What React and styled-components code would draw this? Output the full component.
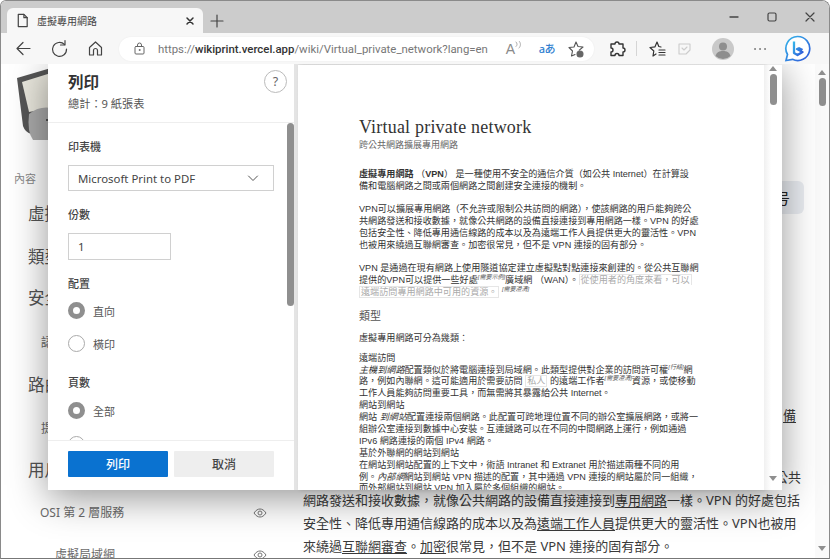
import React from 'react';
import styled, { createGlobalStyle } from 'styled-components';

const CJK = '"Noto Sans", "Noto Sans CJK TC", sans-serif';
const Global = createGlobalStyle`
  html, body { margin: 0; padding: 0; background: #fff; overflow: hidden; }
  body { font-family: ${CJK}; }
  * { box-sizing: border-box; }
  svg { flex: none; }
`;

const Win = styled.div`
  width: 830px; height: 559px; display: flex; flex-direction: column; overflow: hidden;
  background: #fff; border: 1px solid #8a8a8a; border-bottom-color: #777; border-top-right-radius: 8px; border-top-left-radius: 6px;
`;
const TabStrip = styled.div`
  height: 32px; flex: none; background: #cccccc; display: flex; align-items: flex-end; padding-left: 6px; position: relative;
`;
const Tab = styled.div`
  width: 196px; height: 25px; background: #f7f7f7; border-radius: 6px 6px 0 0; display: flex; align-items: center; padding: 0 8px 0 8px;
`;
const TabTitle = styled.span`
  flex: 1; margin-left: 7px; font-size: 10px; color: #444; white-space: nowrap;
`;
const NewTab = styled.div`
  width: 28px; height: 25px; display: flex; align-items: center; justify-content: center;
`;
const Caption = styled.div`
  margin-left: auto; height: 32px; align-self: flex-start; display: flex; align-items: center; padding-right: 12px; gap: 24px;
`;
const Toolbar = styled.div`
  height: 31px; flex: none; background: #f7f7f7; display: flex; align-items: center; padding-left: 12px; position: relative;
`;
const NavGroup = styled.div`
  display: flex; align-items: center; gap: 15px; width: 106px; flex: none;
`;
const Address = styled.div`
  width: 475px; flex: none; height: 24px; background: #fff; border-radius: 12px; display: flex; align-items: center; padding: 0 9px 0 14px; box-shadow: 0 0 2px rgba(0,0,0,.06);
`;
const Url = styled.div`
  margin-left: 12px; font-size: 11.4px; color: #777; white-space: nowrap; flex: 1; font-family: Roboto, sans-serif;
  b { font-weight: 500; color: #333; }
`;
const AddrIcons = styled.div`
  display: flex; align-items: center; gap: 12px; flex: none;
`;
const ReadAloud = styled.div`
  display: flex; align-items: flex-start; justify-content: flex-end; font-size: 14px; line-height: 16px; color: #8a8a8a; width: 20px; font-family: "Liberation Sans", sans-serif;
`;
const Translate = styled.div`
  font-size: 11px; line-height: 16px; font-weight: 500; color: #2f7fd1; width: 20px; text-align: right; white-space: nowrap; font-family: "Noto Sans", "Noto Sans CJK JP", sans-serif; letter-spacing: -.5px;
`;
const ToolIcons = styled.div`
  display: flex; align-items: center; margin-left: 13px; flex: none;
`;
const Slot = styled.div`
  width: ${p => p.$w}px; flex: none; display: flex; align-items: center; justify-content: center;
`;
const Sep = styled.div`
  width: 1px; height: 15px; background: #d5d5d5; margin: 0 10px; flex: none;
`;

const Content = styled.div`
  flex: 1; position: relative; display: flex; overflow: hidden; background: #fff;
`;
const Sidebar = styled.div`
  width: 290px; flex: none; padding: 4px 0 0 13px; color: #555;
`;
const BookWrap = styled.div`
  height: 102px; padding-left: 3px;
`;
const TocHead = styled.div`
  font-size: 11px; color: #888; height: 18px; line-height: 18px;
`;
const TocLarge = styled.div`
  font-size: 16.5px; color: #555; height: 24px; line-height: 24px; margin-left: 14px; margin-top: ${p => p.$mt}px; white-space: nowrap;
`;
const TocSmall = styled.div`
  font-size: 12px; color: #6b6b6b; height: 18px; line-height: 18px; display: flex; align-items: center; justify-content: space-between;
  margin-top: ${p => p.$mt}px; margin-left: ${p => p.$ml}px; width: ${p => 253 - p.$ml}px; white-space: nowrap;
`;
const Main = styled.div`
  flex: 1; padding: 117px 0 0 12px; position: relative; font-size: 13px; color: #3a3a3a; min-width: 0;
`;
const ChipRow = styled.div`
  display: flex; justify-content: flex-end; padding-right: 11px; height: 34px;
`;
const Chip = styled.div`
  width: 60px; height: 33px; background: #eaedf2; border-radius: 6px; font-size: 15px; color: #222; display: flex; align-items: center; justify-content: flex-end; padding-right: 14px;
`;
const BodyLine = styled.div`
  height: 23px; line-height: 23px; white-space: nowrap; margin-top: ${p => p.$mt || 0}px;
  padding-left: ${p => p.$pl || 0}px;
  u { text-underline-offset: 2px; }
`;
const PageScroll = styled.div`
  width: 14px; flex: none; display: flex; flex-direction: column; align-items: center; padding-top: 6px; position: relative; background: #fafafa;
`;
const Thumb = styled.div`
  width: 7px; height: ${p => p.$h}px; background: #8f8f8f; border-radius: 4px; margin-top: ${p => p.$mt}px;
`;
const Up = styled.div`
  width: 0; height: 0; border-left: 4px solid transparent; border-right: 4px solid transparent; border-bottom: 5px solid #8f8f8f;
`;
const Down = styled.div`
  width: 0; height: 0; border-left: 4px solid transparent; border-right: 4px solid transparent; border-top: 5px solid #8f8f8f;
  margin-top: ${p => p.$mt || 0}px;
`;

const Dialog = styled.div`
  position: absolute; left: 47px; top: -2px; width: 734px; height: 428px; background: #fff; display: flex;
  box-shadow: 0 8px 36px rgba(0,0,0,.42);
`;
const Panel = styled.div`
  width: 246px; flex: none; display: flex; flex-direction: column; background: #fff;
`;
const PanelHead = styled.div`
  height: 61px; flex: none; padding: 8px 7px 0 20px; border-bottom: 1px solid #eee; display: flex; justify-content: space-between;
`;
const PanelTitle = styled.div`
  font-size: 15.5px; font-weight: 700; color: #333; line-height: 24px;
`;
const PanelSub = styled.div`
  font-size: 11.2px; color: #555; line-height: 18px; margin-top: 1px;
`;
const Help = styled.div`
  width: 23px; height: 23px; border: 1px solid #bbb; border-radius: 50%; display: flex; align-items: center; justify-content: center; font-size: 12.5px; color: #666;
`;
const PanelBody = styled.div`
  flex: 1; display: flex; overflow: hidden; min-height: 0;
`;
const Form = styled.div`
  flex: 1; padding: 15px 0 0 20px; overflow: hidden;
`;
const Label = styled.div`
  font-size: 11px; font-weight: 500; color: #444; line-height: 18px; margin-top: ${p => p.$mt || 0}px;
`;
const Select = styled.div`
  width: 206px; height: 26px; border: 1px solid #d0d0d0; margin-top: 9px; display: flex; align-items: center; justify-content: space-between;
  padding: 0 14px 0 9px; font-size: 11.4px; color: #444;
`;
const Input = styled.div`
  width: 103px; height: 27px; border: 1px solid #d0d0d0; margin-top: 9px; padding-left: 9px; font-size: 11.4px; color: #444; display: flex; align-items: center;
`;
const RadioRow = styled.div`
  display: flex; align-items: center; gap: 8px; height: 17px; margin-top: ${p => p.$mt}px; font-size: 11px; color: #555;
`;
const Radio = styled.div`
  width: 17px; height: 17px; border-radius: 50%;
  border: ${p => (p.$on ? '5px solid #8f8f8f' : '1px solid #aaa')}; background: #fff; flex: none;
`;
const PanelScroll = styled.div`
  width: 7px; flex: none;
`;
const Footer = styled.div`
  height: 50px; flex: none; border-top: 1px solid #eee; display: flex; gap: 6px; padding: 10px 0 0 20px;
`;
const Button = styled.div`
  width: 100px; height: 26px; display: flex; align-items: center; justify-content: center; font-size: 12px; font-weight: 500; border-radius: 1px;
  background: ${p => (p.$primary ? '#0a72d0' : '#eeeeee')}; color: ${p => (p.$primary ? '#fff' : '#444')};
`;
const PreviewArea = styled.div`
  flex: 1; display: flex; background: linear-gradient(90deg, #e4e4e4, #ececec); padding: 3px 0 0 4px; min-width: 0;
`;
const Paper = styled.div`
  width: 466px; flex: none; background: #fff; padding: 51px 0 0 61px; overflow: hidden; color: #333; font-size: 9.1px; font-family: "Liberation Sans", "Noto Sans CJK TC", sans-serif;
  box-shadow: 2px 0 4px rgba(0,0,0,.15);
`;
const DocTitle = styled.div`
  font-family: "Liberation Serif", serif; font-size: 18px; line-height: 22px; color: #333; letter-spacing: .2px;
`;
const DocSub = styled.div`
  font-size: 9px; line-height: 12px; margin-top: 1px; color: #666;
`;
const Para = styled.div`
  margin-top: ${p => p.$mt}px;
`;
const L = styled.div`
  height: ${p => p.$h || 12.3}px; line-height: ${p => p.$h || 12.3}px; white-space: nowrap;
  sup { font-size: 6px; font-style: italic; line-height: 0; color: #555; }
`;
const H2 = styled.div`
  font-size: 11px; line-height: 14px; margin-top: 10px; color: #555;
`;
const Hint = styled.span`
  color: #aaa; border: 1px solid #e6e6e6; border-bottom: ${p => (p.$open ? 'none' : '1px solid #e6e6e6')}; padding: 0 1px;
`;
const PreviewScroll = styled.div`
  flex: 1; display: flex; flex-direction: column; align-items: center; padding-top: 1px; background: linear-gradient(90deg, #f0f0f0, #fff 40%);
`;

const S = { fill: 'none', stroke: '#444', strokeWidth: 1.3, strokeLinecap: 'round', strokeLinejoin: 'round' };
const Ic = ({ s = 16, v = 16, c, children }) => (
  <svg width={s} height={s} viewBox={`0 0 ${v} ${v}`} {...S} {...c}>{children}</svg>
);
const Eye = () => (
  <svg width="14" height="10" viewBox="0 0 14 10" fill="none" stroke="#777" strokeWidth="1">
    <path d="M1 5c2-3 4-4 6-4s4 1 6 4c-2 3-4 4-6 4S3 8 1 5z" /><circle cx="7" cy="5" r="2" />
  </svg>
);
const Book = () => (
  <svg width="40" height="72" viewBox="0 0 40 72">
    <path d="M0 10 L34 0 V45 L14 66 Q8 64 6 58z" fill="#555" />
    <path d="M5 14 L34 5 V40 L12 44z" fill="#e9e7dd" />
    <path d="M12 46 Q22 38 34 40 V72 H16 Q10 64 12 46z" fill="#aaa" />
    <circle cx="30" cy="52" r="1" fill="#333" />
  </svg>
);

export default function App() {
  return (
    <Win>
      <Global />
      <TabStrip>
        <Tab>
          <Ic s={15}><path d="M3.500 1.500h6l3.500 3.500v9.500h-9.500z" /><path d="M9.500 1.500V5H13" /></Ic>
          <TabTitle>虛擬專用網路</TabTitle>
          <Ic s={10} v={10} c={{ strokeWidth: 1.5, stroke: '#333' }}><path d="M2 2l6 6M8 2l-6 6" /></Ic>
        </Tab>
        <NewTab>
          <Ic s={14} v={14} c={{ strokeWidth: 1.2 }}><path d="M7 1v12M1 7h12" /></Ic>
        </NewTab>
        <Caption>
          <Ic s={14} v={14} c={{ strokeWidth: 1.3 }}><path d="M3 7h8" /></Ic>
          <Ic s={14} v={14} c={{ strokeWidth: 1.2 }}><rect x="3" y="3" width="8" height="8" rx="1.5" /></Ic>
          <Ic s={14} v={14} c={{ strokeWidth: 1.2 }}><path d="M3 3l8 8M11 3l-8 8" /></Ic>
        </Caption>
      </TabStrip>
      <Toolbar>
        <NavGroup>
          <Ic s={21} v={21} c={{ strokeWidth: 1.2 }}><path d="M17 10.500H4M10 4.500l-6 6 6 6" /></Ic>
          <Ic s={21} v={21} c={{ strokeWidth: 1.2 }}><path d="M15.500 6.500A7 7 0 1 0 17.500 11" /><path d="M16 2.500v4.500h-4.500" /></Ic>
          <Slot $w={21}><Ic s={17} v={17} c={{ strokeWidth: 1.2 }}><path d="M2.500 7.500L8.500 2l6 5.500V15h-4v-4.500a2 2 0 0 0-4 0V15h-4z" /></Ic></Slot>
        </NavGroup>
        <Address>
          <Ic s={13} v={13} c={{ strokeWidth: 1, stroke: '#666' }}><rect x="2" y="4.500" width="9" height="7.500" rx="1" /><path d="M4.500 4.500V3a2 2 0 0 1 4 0v1.500" /><circle cx="6.500" cy="8" r=".5" /></Ic>
          <Url>https://<b>wikiprint.vercel.app</b>/wiki/Virtual_private_network?lang=en</Url>
          <AddrIcons>
            <ReadAloud>A<Ic s={8} v={8} c={{ strokeWidth: .8, stroke: '#999' }}><path d="M1 1c1.500 1.500 1.500 3 0 4.500M4 0c2 2 2 5 0 7" /></Ic></ReadAloud>
            <Translate>aあ</Translate>
            <Ic s={18} v={18} c={{ strokeWidth: 1.1, stroke: '#555' }}><path d="M9 2l2 4.500 5 .5-3.700 3.200M8 14.500L4.500 16l1-5L2 7.500l5-.5L9 2" /><circle cx="13" cy="14" r="3" fill="#666" stroke="#666" /></Ic>
          </AddrIcons>
        </Address>
        <ToolIcons>
          <Slot $w={19}><Ic s={18} v={18} c={{ strokeWidth: 1.4, stroke: '#333' }}><path d="M7 4a2 2 0 0 1 4 0h4v4a2 2 0 0 1 0 4v3.500H11a2 2 0 0 0-4 0H3V12a2 2 0 0 0 0-4V4z" /></Ic></Slot>
          <Sep />
          <Slot $w={19}><Ic s={18} v={18} c={{ strokeWidth: 1.2, stroke: '#333' }}><path d="M9 2l1.800 4.500L13 7M8 14l-3 2 .8-5L2 7.500l5-.7L9 2M11 10h6M11 12.500h6M11 15h6" /></Ic></Slot>
          <Slot $w={36}><Ic s={17} v={17} c={{ strokeWidth: 1.1, stroke: '#ccc' }}><path d="M3 4h11v6l-4 4H3z" /><path d="M6 8l2 2 3-3" /></Ic></Slot>
          <Slot $w={42}>
            <svg width="22" height="22" viewBox="0 0 22 22"><circle cx="11" cy="11" r="11" fill="#c9c9c9" /><circle cx="11" cy="8.500" r="4" fill="#8e8e8e" /><path d="M3.500 18c1-4 4-5 7.500-5s6.500 1 7.500 5a11 11 0 0 1-15 0z" fill="#8e8e8e" /></svg>
          </Slot>
          <Slot $w={32}><Ic s={16} c={{ strokeWidth: 1.6, stroke: '#333' }}><path d="M3 8h.1M8 8h.1M13 8h.1" /></Ic></Slot>
          <Slot $w={42}>
            <svg width="27" height="27" viewBox="0 0 27 27">
              <defs><linearGradient id="bg" x1="0" y1="0" x2="1" y2="1"><stop offset="0" stopColor="#36b6ea" /><stop offset="1" stopColor="#2f57d8" /></linearGradient></defs>
              <path d="M13.500 1.500a12 12 0 1 1-5 22.800L2 25.500l1.500-6A12 12 0 0 1 13.500 1.500z" fill="#fff" stroke="url(#bg)" strokeWidth="1.700" />
              <path d="M10 6.500V18l3.500 2 5-3-5.500-3 2-.8 3.500 1.800" fill="none" stroke="url(#bg)" strokeWidth="2.300" strokeLinejoin="round" />
            </svg>
          </Slot>
        </ToolIcons>
      </Toolbar>
      <Content>
        <Sidebar>
          <BookWrap><Book /></BookWrap>
          <TocHead>內容</TocHead>
          <TocLarge $mt={14}>虛擬</TocLarge>
          <TocLarge $mt={19}>類型</TocLarge>
          <TocLarge $mt={17}>安全</TocLarge>
          <TocSmall $ml={27} $mt={24}>認</TocSmall>
          <TocLarge $mt={21}>路由</TocLarge>
          <TocSmall $ml={27} $mt={23}>提</TocSmall>
          <TocLarge $mt={20}>用戶</TocLarge>
          <TocSmall $ml={26} $mt={22}>OSI 第 2 層服務<Eye /></TocSmall>
          <TocSmall $ml={41} $mt={24}>虛擬局域網<Eye /></TocSmall>
        </Sidebar>
        <Main>
          <ChipRow><Chip>号</Chip></ChipRow>
          <BodyLine $mt={189} $pl={480}><u>備</u></BodyLine>
          <BodyLine $mt={39} $pl={472}>公共</BodyLine>
          <BodyLine>網路發送和接收數據，就像公共網路的設備直接連接到<u>專用網路</u>一樣。VPN 的好處包括</BodyLine>
          <BodyLine>安全性、降低專用通信線路的成本以及為<u>遠端工作人員</u>提供更大的靈活性。VPN也被用</BodyLine>
          <BodyLine>來繞過<u>互聯網審查</u>。<u>加密</u>很常見，但不是 VPN 連接的固有部分。</BodyLine>
        </Main>
        <PageScroll>
          <Up />
          <Thumb $h={28} $mt={3} />
          <Down $mt={440} />
        </PageScroll>
        <Dialog>
          <Panel>
            <PanelHead>
              <div>
                <PanelTitle>列印</PanelTitle>
                <PanelSub>總計：9 紙張表</PanelSub>
              </div>
              <Help>?</Help>
            </PanelHead>
            <PanelBody>
              <Form>
                <Label>印表機</Label>
                <Select>Microsoft Print to PDF
                  <Ic s={12} v={12} c={{ strokeWidth: 1, stroke: '#555' }}><path d="M1.500 4l4.500 4.500L10.500 4" /></Ic>
                </Select>
                <Label $mt={15}>份數</Label>
                <Input>1</Input>
                <Label $mt={15}>配置</Label>
                <RadioRow $mt={9}><Radio $on />直向</RadioRow>
                <RadioRow $mt={16}><Radio />橫印</RadioRow>
                <Label $mt={22}>頁數</Label>
                <RadioRow $mt={10}><Radio $on />全部</RadioRow>
                <RadioRow $mt={17}><Radio />備案範圍</RadioRow>
              </Form>
              <PanelScroll><Thumb $h={183} $mt={0} /></PanelScroll>
            </PanelBody>
            <Footer>
              <Button $primary>列印</Button>
              <Button>取消</Button>
            </Footer>
          </Panel>
          <PreviewArea>
            <Paper>
              <DocTitle>Virtual private network</DocTitle>
              <DocSub>跨公共網路擴展專用網路</DocSub>
              <Para $mt={17}>
                <L><b>虛擬專用網路</b> （<b>VPN</b>） 是一種使用不安全的通信介質（如公共 Internet）在計算設</L>
                <L>備和電腦網路之間或兩個網路之間創建安全連接的機制。</L>
              </Para>
              <Para $mt={10}>
                <L>VPN可以擴展專用網路（不允許或限制公共訪問的網路），使該網路的用戶能夠跨公</L>
                <L>共網路發送和接收數據，就像公共網路的設備直接連接到專用網路一樣。VPN 的好處</L>
                <L>包括安全性、降低專用通信線路的成本以及為遠端工作人員提供更大的靈活性。VPN</L>
                <L>也被用來繞過互聯網審查。加密很常見，但不是 VPN 連接的固有部分。</L>
              </Para>
              <Para $mt={10}>
                <L>VPN 是通過在現有網路上使用隧道協定建立虛擬點對點連接來創建的。從公共互聯網</L>
                <L>提供的VPN可以提供一些好處<sup>[需要示例]</sup>廣域網 （WAN）。<Hint $open>從使用者的角度來看，可以</Hint></L>
                <L><Hint>遠端訪問專用網路中可用的資源。</Hint> <sup>[需要澄清]</sup></L>
              </Para>
              <H2>類型</H2>
              <Para $mt={9}><L $h={12}>虛擬專用網路可分為幾類：</L></Para>
              <Para $mt={9}>
                <L $h={11.9}>遠端訪問</L>
                <L $h={11.9}><i>主機到網路</i>配置類似於將電腦連接到局域網。此類型提供對企業的訪問許可權<sup>[行話]</sup>網</L>
                <L $h={11.9}>路，例如內聯網。這可能適用於需要訪問 <Hint>私人</Hint> 的遠端工作者<sup>[需要澄清]</sup>資源，或使移動</L>
                <L $h={11.9}>工作人員能夠訪問重要工具，而無需將其暴露給公共 Internet。</L>
                <L $h={11.9}>網站到網站</L>
                <L $h={11.9}>網站 <i>到網站</i>配置連接兩個網路。此配置可跨地理位置不同的辦公室擴展網路，或將一</L>
                <L $h={11.9}>組辦公室連接到數據中心安裝。互連鏈路可以在不同的中間網路上運行，例如通過</L>
                <L $h={11.9}>IPv6 網路連接的兩個 IPv4 網路。</L>
                <L $h={11.9}>基於外聯網的網站到網站</L>
                <L $h={11.9}>在網站到網站配置的上下文中，術語 Intranet 和 Extranet 用於描述兩種不同的用</L>
                <L $h={11.9}>例。<i>內部網</i>網站到網站 VPN 描述的配置，其中通過 VPN 連接的網站屬於同一組織，</L>
                <L $h={11.9}>而外部網站到網站 VPN 加入屬於多個組織的網站。</L>
              </Para>
            </Paper>
            <PreviewScroll>
              <Up />
              <Thumb $h={31} $mt={3} />
              <Down $mt={371} />
            </PreviewScroll>
          </PreviewArea>
        </Dialog>
      </Content>
    </Win>
  );
}
